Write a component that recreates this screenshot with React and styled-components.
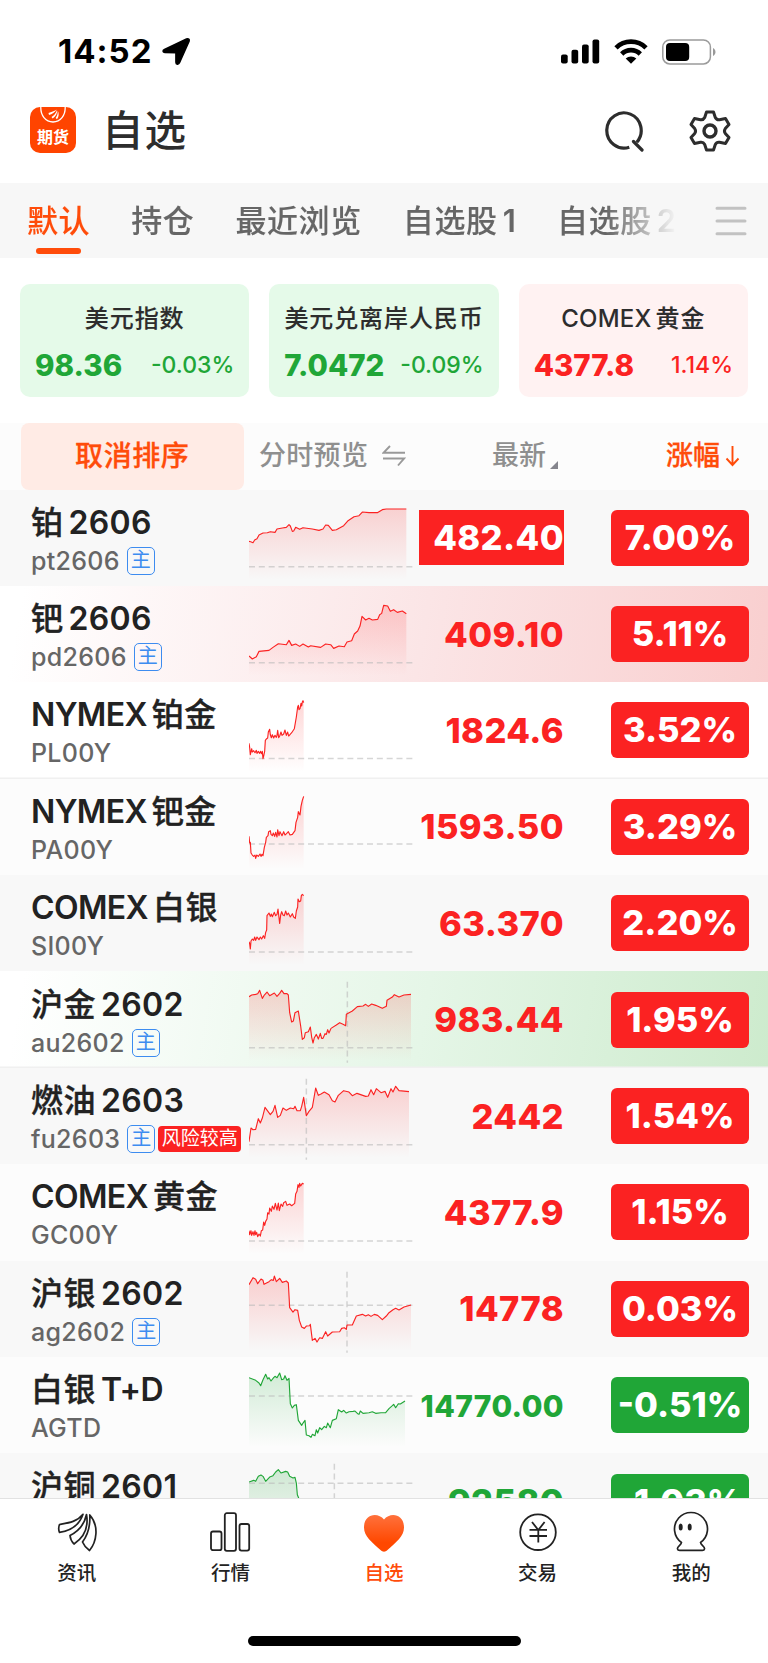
import { useId } from "react";
import styled, { createGlobalStyle, css } from "styled-components";

const RED = "#fb2222";
const GREEN = "#20a637";
const ORANGE = "#ff4c0a";

const TABS = ["默认", "持仓", "最近浏览", "自选股1", "自选股2"];

const INDEXES = [
  { name: "美元指数", value: "98.36", change: "-0.03%" },
  { name: "美元兑离岸人民币", value: "7.0472", change: "-0.09%" },
  { name: "COMEX黄金", value: "4377.8", change: "1.14%", up: true },
];

// 分时图坐标: 492 x 289, base 为昨收线, split 为夜盘/日盘分隔线
const QUOTES = [
  {
    name: "铂2606",
    code: "pt2606",
    main: true,
    price: "482.40",
    change: "7.00%",
    up: true,
    limit: true,
    bg: "#f8f8f8",
    base: 230,
    line: "0,154 5,155 12,158 17,150 24,146 30,135 42,129 55,128 64,125 78,127 84,117 100,114 112,112 120,104 124,108 130,124 134,123 140,112 152,118 162,113 190,117 210,121 222,117 230,105 238,106 250,121 262,119 284,107 296,93 315,80 330,77 340,66 360,68 385,68 400,59 412,57 472,57",
  },
  {
    name: "钯2606",
    code: "pd2606",
    main: true,
    price: "409.10",
    change: "5.11%",
    up: true,
    bg: "linear-gradient(100deg, #fff 3%, #fbe5e6 55%, #f9cfcf 100%)",
    base: 230,
    line: "0,210 10,219 22,212 30,196 60,193 72,184 88,173 112,176 120,163 128,178 140,174 152,181 162,174 178,183 185,179 215,184 230,174 245,176 254,187 270,180 286,182 294,168 308,164 316,144 326,135 333,120 339,91 350,102 360,97 370,102 386,100 392,86 398,82 404,58 416,60 424,76 434,71 445,79 460,75 472,83",
  },
  {
    name: "NYMEX铂金",
    code: "PL00Y",
    price: "1824.6",
    change: "3.52%",
    up: true,
    bg: "#fff",
    divider: true,
    base: 229,
    line: "0,184 2,196 4,218 8,200 10,210 14,206 18,212 22,205 24,214 28,208 32,214 35,208 38,215 40,208 42,230 44,222 47,208 49,175 53,170 56,168 58,150 62,142 64,158 67,167 70,158 74,168 78,160 82,166 84,160 86,145 89,167 92,162 96,150 99,160 104,156 108,144 112,160 116,150 119,162 128,152 136,140 142,105 146,75 148,70 150,83 153,80 156,64 158,72 160,60 162,56 164,62",
  },
  {
    name: "NYMEX钯金",
    code: "PA00Y",
    price: "1593.50",
    change: "3.29%",
    up: true,
    bg: "#fcfcfc",
    base: 195,
    line: "0,172 2,192 4,190 6,222 10,228 14,232 18,228 20,238 23,228 28,232 33,225 36,232 39,226 42,230 46,205 50,190 52,175 57,170 59,158 64,155 66,166 70,170 73,162 77,172 80,160 84,174 86,152 90,170 93,158 99,170 104,158 108,168 114,162 118,158 123,168 130,166 138,155 141,130 146,115 148,98 153,108 156,82 160,64 162,58 164,52",
  },
  {
    name: "COMEX白银",
    code: "SI00Y",
    price: "63.370",
    change: "2.20%",
    up: true,
    bg: "#f8f8f8",
    base: 231,
    line: "0,200 2,206 4,222 6,198 10,192 14,196 17,186 20,196 24,186 30,194 34,186 38,192 43,182 47,190 50,172 53,165 54,122 60,114 64,124 67,117 70,125 76,112 80,122 84,118 87,102 92,145 95,120 98,110 102,120 106,122 110,108 114,120 118,114 124,126 130,116 134,126 139,130 142,108 146,96 147,72 151,80 155,78 157,62 160,58 164,62",
  },
  {
    name: "沪金2602",
    code: "au2602",
    main: true,
    price: "983.44",
    change: "1.95%",
    up: true,
    bg: "linear-gradient(100deg, #fff 3%, #e5f6e7 55%, #cdebcd 100%)",
    divider: true,
    base: 230,
    split: 295,
    line: "0,77 8,72 20,70 26,68 32,58 40,82 46,72 54,63 62,74 76,66 84,76 92,67 98,58 105,68 114,68 118,72 122,125 128,153 133,150 138,125 148,120 155,165 160,205 166,200 169,185 178,182 184,168 188,198 192,216 196,200 202,190 208,204 214,187 218,202 222,202 228,188 232,190 236,176 240,186 246,172 262,162 272,155 282,160 290,164 292,130 310,120 325,107 342,105 350,100 358,106 368,99 380,103 400,112 412,106 414,88 430,78 436,71 450,78 465,72 486,70",
  },
  {
    name: "燃油2603",
    code: "fu2603",
    main: true,
    risk: true,
    price: "2442",
    change: "1.54%",
    up: true,
    bg: "#f8f8f8",
    base: 230,
    split: 172,
    line: "0,221 6,180 12,185 20,184 28,152 34,165 40,150 48,118 64,140 72,130 78,112 86,148 94,142 102,120 112,127 124,120 134,122 138,115 144,128 154,128 158,115 164,88 172,143 180,130 190,118 200,60 208,82 216,78 226,72 240,80 250,98 258,102 268,82 284,68 300,72 310,83 324,76 350,85 358,84 366,65 374,80 382,62 396,74 408,70 416,88 426,62 432,72 440,55 450,68 480,71",
  },
  {
    name: "COMEX黄金",
    code: "GC00Y",
    price: "4377.9",
    change: "1.15%",
    up: true,
    bg: "#fcfcfc",
    base: 231,
    line: "0,200 2,212 6,200 8,214 12,203 15,214 18,200 20,212 23,205 26,218 30,210 34,216 37,200 41,198 44,174 47,184 50,172 54,165 56,146 60,150 62,132 67,142 70,126 75,136 79,118 84,138 88,117 91,140 96,120 101,127 104,116 110,112 114,124 122,120 128,125 137,118 140,90 144,82 147,62 150,70 152,58 155,66 160,58 164,60",
  },
  {
    name: "沪银2602",
    code: "ag2602",
    main: true,
    price: "14778",
    change: "0.03%",
    up: true,
    bg: "#f8f8f8",
    base: 133,
    split: 294,
    line: "0,71 12,50 20,55 26,68 36,54 42,58 45,70 60,62 67,56 73,58 76,45 82,62 92,52 100,64 112,60 118,66 122,140 132,153 138,146 146,148 151,178 158,198 166,202 172,195 182,194 184,190 190,238 198,232 204,243 212,230 220,232 230,212 236,225 250,213 272,212 278,202 286,200 292,205 294,192 310,192 322,165 340,160 350,165 358,161 366,166 376,160 386,163 400,176 412,165 420,155 432,146 440,142 450,147 465,138 486,132",
  },
  {
    name: "白银T+D",
    code: "AGTD",
    price: "14770.00",
    change: "-0.51%",
    small: true,
    bg: "#fcfcfc",
    base: 117,
    line: "0,62 20,70 30,78 35,86 42,68 50,52 56,66 60,62 66,72 74,62 78,58 84,62 92,48 98,68 104,66 108,56 114,70 120,64 124,140 130,153 136,145 142,143 148,190 158,205 162,198 168,190 172,234 180,236 186,241 190,232 198,236 202,218 206,228 212,212 218,218 226,208 232,212 236,198 244,212 250,190 262,185 268,158 278,165 284,160 292,168 300,164 312,163 318,162 326,170 330,172 334,162 342,169 360,167 370,164 380,169 396,167 410,167 420,155 430,146 434,142 440,152 448,140 454,141 468,132",
  },
  {
    name: "沪铜2601",
    code: "cu2601",
    main: true,
    price: "92580",
    change: "-1.03%",
    bg: "#f8f8f8",
    base: 91,
    split: 256,
    line: "0,87 14,82 20,85 28,70 36,66 42,70 50,85 62,72 72,68 80,57 88,50 96,60 110,55 116,57 122,70 132,75 138,73 142,90 145,125 149,135 155,200 200,220 300,190 486,170",
  },
];

const NAV = [
  { label: "资讯", icon: NewsIcon },
  { label: "行情", icon: MarketIcon },
  { label: "自选", icon: HeartIcon, active: true },
  { label: "交易", icon: TradeIcon },
  { label: "我的", icon: MineIcon },
];

// 中英文混排时分开渲染, 间距由外层控制
const splitScript = (text) => text.match(/[\u4e00-\u9fff]+|[^\u4e00-\u9fff]+/g);

const MixedText = ({ text }) =>
  splitScript(text).map((part) =>
    /[\u4e00-\u9fff]/.test(part) ? (
      <Han key={part}>{part}</Han>
    ) : (
      <Latin key={part} $caps={/[A-Z]/.test(part)}>
        {part}
      </Latin>
    )
  );

function App() {
  return (
    <>
      <GlobalStyle />
      <Page>
        <StatusBar />
        <Header>
          <Logo />
          <Title>自选</Title>
          <SearchIcon />
          <GearIcon />
        </Header>
        <TabBar>
          <TabList>
            {TABS.map((tab, i) => (
              <Tab key={tab} $active={i === 0}>
                <TabLabel>
                  <MixedText text={tab} />
                </TabLabel>
                {i === 0 && <Underline />}
              </Tab>
            ))}
          </TabList>
          <MenuIcon />
        </TabBar>
        <Cards>
          {INDEXES.map((item) => (
            <Card key={item.name} $up={item.up}>
              <CardName>
                <MixedText text={item.name} />
              </CardName>
              <CardRow>
                <CardValue>{item.value}</CardValue>
                <CardChange>{item.change}</CardChange>
              </CardRow>
            </Card>
          ))}
        </Cards>
        <SortBar>
          <CancelSort>取消排序</CancelSort>
          <Preview>
            分时预览
            <SwapIcon />
          </Preview>
          <Latest>
            最新
            <Corner />
          </Latest>
          <Range>
            涨幅
            <DownIcon />
          </Range>
        </SortBar>
        <List>
          {QUOTES.map((quote) => (
            <QuoteRow key={quote.code} quote={quote} />
          ))}
        </List>
        <BottomNav>
          {NAV.map(({ label, icon: Icon, active }) => (
            <NavItem key={label} $active={active}>
              <Icon />
              {label}
            </NavItem>
          ))}
        </BottomNav>
        <HomeArea>
          <HomeBar />
        </HomeArea>
      </Page>
    </>
  );
}

const QuoteRow = ({ quote }) => (
  <Row $bg={quote.bg} $divider={quote.divider}>
    <NameCell>
      <Name>
        <MixedText text={quote.name} />
      </Name>
      <CodeLine>
        <Code>{quote.code}</Code>
        {quote.main && <MainTag>主</MainTag>}
        {quote.risk && <RiskTag>风险较高</RiskTag>}
      </CodeLine>
    </NameCell>
    <Sparkline quote={quote} />
    <Price $up={quote.up} $limit={quote.limit} $small={quote.small}>
      {quote.price}
    </Price>
    <Change $up={quote.up}>{quote.change}</Change>
  </Row>
);

const Sparkline = ({ quote }) => {
  const id = useId();
  const color = quote.up ? RED : GREEN;
  const last = quote.line.split(" ").pop().split(",")[0];
  return (
    <Chart viewBox="0 0 492 289" preserveAspectRatio="none">
      <defs>
        <linearGradient id={id} gradientUnits="userSpaceOnUse" x1="0" y1="50" x2="0" y2="270">
          <stop offset="0" stopColor={color} stopOpacity="0.19" />
          <stop offset="1" stopColor={color} stopOpacity="0" />
        </linearGradient>
      </defs>
      <polygon points={`0,270 ${quote.line} ${last},270`} fill={`url(#${id})`} />
      <g stroke="#bbb" strokeOpacity="0.6" strokeWidth="4.5" strokeDasharray="18 11.5">
        <line x1="0" x2="492" y1={quote.base} y2={quote.base} />
        {quote.split && <line x1={quote.split} x2={quote.split} y1="32" y2="275" />}
      </g>
      <polyline
        points={quote.line}
        fill="none"
        stroke={color}
        strokeWidth="3.4"
        strokeLinejoin="round"
      />
    </Chart>
  );
};

const StatusBar = () => (
  <Status>
    <Time>14:52</Time>
    <svg width="29" height="29" viewBox="0 0 29 29">
      <path
        d="M2.500 12.500 24.500 2c1.900-.9 3.300.4 2.600 2.300L17.500 25.800c-.9 2-3.600 1.800-3.600-.6V15.800L2.700 15.500C.5 15.400.5 13.500 2.500 12.500Z"
        stroke="#000"
        strokeWidth="1.500"
      />
    </svg>
    <StatusIcons>
      <svg width="39" height="25" viewBox="0 0 39 25">
        <rect x="0" y="15.500" width="6.700" height="9" rx="2" />
        <rect x="10.500" y="10.700" width="6.700" height="13.800" rx="2" />
        <rect x="21" y="5.600" width="6.700" height="18.900" rx="2" />
        <rect x="31.500" y="0.500" width="6.700" height="24" rx="2" />
      </svg>
      <svg width="34" height="25" viewBox="0 0 34 25">
        <g fill="none" stroke="#000" strokeWidth="4.700">
          <path d="M2 8.900a21.300 21.300 0 0 1 30 0" />
          <path d="M7.700 15a13.200 13.200 0 0 1 18.600 0" />
        </g>
        <path d="M17 24.800l-5.300-5.200a7.600 7.600 0 0 1 10.600 0z" />
      </svg>
      <svg width="55" height="26" viewBox="0 0 55 26">
        <rect x="0.800" y="0.900" width="47.600" height="24" rx="7" fill="none" stroke="#9b9b9b" strokeWidth="1.500" />
        <rect x="4" y="4" width="23.200" height="18" rx="4" />
        <path d="M51 9v8c3.300-1.600 3.300-6.400 0-8z" fill="#999" />
      </svg>
    </StatusIcons>
  </Status>
);

const Logo = () => (
  <LogoBox>
    <svg width="46" height="18" viewBox="0 0 46 18">
      <path d="M10.800 0C10.500 8.500 15.500 15 23 15S35.500 8.500 35.200 0" fill="none" stroke="#fff" strokeWidth="1.300" />
      <path
        d="M26.500 2.500c-2.500 2-5 2.300-8 3.500l.5 2c3-.8 6-2.500 7.500-5.500zM27 3c-1 3.500-3 5.300-5.500 7l1.200 1.500c3-2 4.800-5 4.300-8.500zM27.700 3.500c.3 3-.5 5.300-2 7.500l1.300 1.300c1.900-2.800 2.300-6 .7-8.800z"
        fill="#fff"
      />
    </svg>
    <span>期货</span>
  </LogoBox>
);

const SearchIcon = () => (
  <SearchSvg width="42" height="42" viewBox="0 0 42 42">
    <g fill="none" stroke="#2d2d2d" strokeWidth="3.200" strokeLinecap="round">
      <path d="M25.300 37.200a17.200 17.600 0 1 1 7.500-5" strokeLinecap="butt" />
      <path d="M29.500 31.500l8.500 8.500" />
    </g>
  </SearchSvg>
);

const GearIcon = () => (
  <svg width="42" height="42" viewBox="0 0 42 42">
    <g fill="none" stroke="#2d2d2d" strokeWidth="3" strokeLinejoin="round">
      <path d="M17.500 2h7l1.800 5.500c.8 1.500 2.500 2.500 4.200 2.200l6-1.200 3.500 6-3.700 4.100c-1 1.400-1 3.400 0 4.800l3.700 4.100-3.500 6-6-1.200c-1.700-.3-3.400.7-4.200 2.200L24.500 40h-7l-1.800-5.500c-.8-1.500-2.500-2.500-4.200-2.200l-6 1.200-3.500-6 3.700-4.100c1-1.400 1-3.400 0-4.800L2 14.500l3.500-6 6 1.200c1.700.3 3.400-.7 4.200-2.200z" />
      <circle cx="21" cy="21" r="6" strokeWidth="3.400" />
    </g>
  </svg>
);

const MenuIcon = () => (
  <svg width="32" height="30" viewBox="0 0 32 30">
    <path d="M2 2.200h28M2 15h28M2 27.800h28" stroke="#c2c2c2" strokeWidth="3" strokeLinecap="round" />
  </svg>
);

const SwapIcon = () => (
  <svg width="24" height="24" viewBox="0 0 24 24">
    <path d="M8 2 1.500 8.800H23M1 14.500h21L16 21.500" fill="none" stroke="#999" strokeWidth="1.900" />
  </svg>
);

const DownIcon = () => (
  <svg width="15" height="22" viewBox="0 0 15 22">
    <path d="M7.500 1v19M1.500 13.500l6 6.500 6-6.500" fill="none" stroke={ORANGE} strokeWidth="1.900" />
  </svg>
);

function NewsIcon() {
  return (
    <svg width="42" height="42" viewBox="0 0 42 42">
      <g fill="none" stroke="#222" strokeWidth="1.700" strokeLinejoin="round">
        <path d="M27 3.300C21 11 12 12 3.500 13.500 2.500 16 2.500 19 3.500 21.300 13 20 23 15 27 3.300z" />
        <path d="M30.500 3.500C28.500 13 23 20 14 24.500c.3 3.500 2 6.500 4 8.500C27 27 33 18 30.500 3.500z" />
        <path d="M33.800 4C34.500 17 31 25 26.500 31c1.500 3.500 4 6.500 7 8.500C40.500 31 43.500 15 33.800 4z" />
      </g>
    </svg>
  );
}

function MarketIcon() {
  return (
    <svg width="42" height="42" viewBox="0 0 42 42">
      <g fill="none" stroke="#222" strokeWidth="1.800">
        <rect x="2" y="20.500" width="10.500" height="18.700" rx="2" />
        <rect x="15.800" y="2.200" width="11.200" height="37.600" rx="2" />
        <rect x="30.500" y="13" width="9.700" height="26.600" rx="2" />
      </g>
    </svg>
  );
}

function HeartIcon() {
  return (
    <svg width="42" height="42" viewBox="0 0 42 42">
      <defs>
        <linearGradient id="heart" x1="0" y1="0" x2="0" y2="1">
          <stop offset="0" stopColor="#ff713c" />
          <stop offset=".75" stopColor="#ff4800" />
        </linearGradient>
      </defs>
      <path
        d="M21 8.500C15 1 1 2.500 1 16.500c0 9 8 14.500 16.500 22.600 2.300 2.200 4.700 2.200 7 0C33 31 41 25.500 41 16.500 41 2.500 27 1 21 8.500z"
        fill="url(#heart)"
      />
    </svg>
  );
}

function TradeIcon() {
  return (
    <svg width="42" height="42" viewBox="0 0 42 42">
      <g fill="none" stroke="#222" strokeWidth="1.800">
        <circle cx="21" cy="21.200" r="17.800" />
        <path d="M15 11l6.300 8 6.300-8M12.500 18.800h17.500M12.500 25h17.500M21.300 19v12.500" />
      </g>
    </svg>
  );
}

function MineIcon() {
  return (
    <svg width="42" height="42" viewBox="0 0 42 42">
      <path
        d="M11.500 31.500A16.500 16.500 0 1 1 30.500 31.500c.3 2.500 4.500 4 4 6.300-.2 1.200-1 1.600-2.200 1.600H9.700c-1.200 0-2-.4-2.200-1.600-.5-2.300 3.700-3.800 4-6.300z"
        fill="none"
        stroke="#222"
        strokeWidth="1.700"
        strokeLinejoin="round"
      />
      <ellipse cx="10.700" cy="16" rx="2" ry="3.500" fill="#222" />
      <ellipse cx="19.700" cy="16" rx="2" ry="3.500" fill="#222" />
    </svg>
  );
}

const GlobalStyle = createGlobalStyle`
  * {
    box-sizing: border-box;
  }
  body {
    margin: 0;
    background: #fff;
    font-family: Inter, "Noto Sans CJK SC", sans-serif;
    color: #222;
  }
  svg {
    display: block;
    flex-shrink: 0;
  }
`;

const Page = styled.div`
  display: flex;
  flex-direction: column;
  width: 768px;
  height: 1663px;
  overflow: hidden;
`;

const Han = styled.span`
  -webkit-text-stroke: 0.1px currentColor;
`;

const Latin = styled.span`
  font-weight: 600;
  letter-spacing: ${({ $caps }) => ($caps ? "-0.02em" : "0.01em")};
`;

const Status = styled.div`
  display: flex;
  align-items: center;
  height: 88px;
  padding: 15px 51px 0 58px;
`;

const Time = styled.span`
  width: 104px;
  margin-top: -1px;
  font-size: 33px;
  font-weight: 700;
  letter-spacing: 1px;
  color: #000;
`;

const StatusIcons = styled.div`
  display: flex;
  align-items: center;
  gap: 14px;
  margin-left: auto;
`;

const Header = styled.header`
  display: flex;
  align-items: center;
  height: 95px;
  padding: 0 37px 10px 30px;
`;

const LogoBox = styled.div`
  display: flex;
  flex-direction: column;
  align-items: center;
  width: 46px;
  height: 46px;
  margin-bottom: 1px;
  border-radius: 10px;
  background: #ff4400;
  color: #fff;
  font-size: 16px;
  font-weight: 600;
  line-height: 24px;
`;

const Title = styled.h1`
  margin: 0 auto 0 26px;
  font-size: 41.500px;
  font-weight: 500;
  line-height: 60px;
  letter-spacing: 1px;
  color: #2d2d2d;
`;

const SearchSvg = styled.svg`
  margin-right: 43px;
`;

const TabBar = styled.nav`
  display: flex;
  align-items: center;
  justify-content: space-between;
  height: 75px;
  padding: 0 21px 0 27px;
  background: #f7f7f7;
`;

const TabList = styled.div`
  display: flex;
  gap: 41px;
  width: 650px;
  overflow: hidden;
  mask-image: linear-gradient(90deg, #000 89%, transparent 100%);
`;

const Tab = styled.div`
  display: flex;
  flex-direction: column;
  align-items: center;
  flex-shrink: 0;
  height: 75px;
  font-size: 31px;
  font-weight: 500;
  color: ${({ $active }) => ($active ? ORANGE : "#666")};
`;

const TabLabel = styled.div`
  display: flex;
  gap: 5px;
  height: 65px;
  line-height: 76px;
  letter-spacing: 0.6px;
`;

const Underline = styled.i`
  width: 45px;
  height: 6px;
  border-radius: 3px;
  background: ${ORANGE};
`;

const Cards = styled.section`
  display: grid;
  grid-template-columns: repeat(3, 1fr);
  gap: 20px;
  padding: 26px 20px;
`;

const Card = styled.div`
  height: 112.500px;
  padding: 17.500px 15px 0;
  border-radius: 10px;
  background: ${({ $up }) => ($up ? "#fff2f2" : "#e5fae9")};
  color: ${({ $up }) => ($up ? RED : GREEN)};
`;

const CardName = styled.div`
  display: flex;
  justify-content: center;
  gap: 4px;
  font-size: 24px;
  font-weight: 500;
  line-height: 34px;
  letter-spacing: 0.9px;
  white-space: nowrap;
  color: #2d2d2d;

  ${Latin} {
    font-weight: 500;
    letter-spacing: 0.2px;
  }
`;

const CardRow = styled.div`
  display: flex;
  align-items: center;
  justify-content: space-between;
  margin-top: 12.500px;
  line-height: 34px;
`;

const CardValue = styled.span`
  font-size: 29.500px;
  font-weight: 800;
`;

const CardChange = styled.span`
  font-size: 23px;
  font-weight: 500;
`;

const SortBar = styled.div`
  display: flex;
  align-items: center;
  height: 67px;
  padding-left: 20.500px;
  background: #fcfcfc;
  font-size: 27px;
  font-weight: 500;
  line-height: 36px;
  color: #8f8f8f;
`;

const CancelSort = styled.div`
  width: 223.500px;
  height: 67px;
  border-radius: 8px;
  background: #ffebe5;
  font-size: 28px;
  letter-spacing: 0.6px;
  line-height: 67px;
  text-align: center;
  color: ${ORANGE};
  -webkit-text-stroke: 0.3px currentColor;
`;

const Preview = styled.div`
  display: flex;
  align-items: center;
  gap: 14px;
  width: 233px;
  padding-left: 15px;
  letter-spacing: 0.3px;
`;

const Latest = styled.div`
  display: flex;
  align-items: center;
  gap: 4px;
  width: 174px;
  padding-left: 15px;
`;

const Corner = styled.i`
  margin-top: 18px;
  border: 4px solid transparent;
  border-right-color: #85858d;
  border-bottom-color: #85858d;
`;

const Range = styled.div`
  display: flex;
  align-items: center;
  gap: 5px;
  padding-left: 15px;
  color: ${ORANGE};
  -webkit-text-stroke: 0.3px currentColor;
`;

const List = styled.main`
  flex: 1;
  min-height: 0;
  overflow: hidden;
`;

const Row = styled.div`
  display: flex;
  align-items: center;
  height: 96.400px;
  padding-left: 31px;
  background: ${({ $bg }) => $bg};
  box-shadow: ${({ $divider }) => ($divider ? "inset 0 -1.5px #f0f0f0" : "none")};
`;

const NameCell = styled.div`
  width: 218px;
  padding-top: 2px;
`;

const Name = styled.div`
  display: flex;
  gap: 5px;
  font-size: 32px;
  font-weight: 500;
  line-height: 40px;
  letter-spacing: 0.5px;
  white-space: nowrap;
  color: #222;

  ${Han} {
    -webkit-text-stroke-width: 0.35px;
  }
`;

const CodeLine = styled.div`
  display: flex;
  align-items: center;
  height: 28px;
  margin-top: 4px;
`;

const Code = styled.span`
  margin-right: 7px;
  font-size: 25px;
  font-weight: 500;
  line-height: 28px;
  letter-spacing: 0.300px;
  color: #666;
`;

const MainTag = styled.span`
  width: 28px;
  height: 28px;
  border: 1.500px solid #3d8cf0;
  border-radius: 5px;
  font-size: 20px;
  line-height: 25px;
  text-align: center;
  color: #3d8cf0;
`;

const RiskTag = styled.span`
  width: 83px;
  height: 26px;
  margin-left: 3px;
  border-radius: 4px;
  background: ${RED};
  font-size: 19px;
  line-height: 26px;
  text-align: center;
  white-space: nowrap;
  color: #fff;
`;

const Chart = styled.svg`
  width: 164px;
  height: 96.400px;
`;

const Price = styled.div`
  width: 145px;
  height: 55px;
  margin-left: 6px;
  font-size: ${({ $small }) => ($small ? "30px" : "34.5px")};
  font-weight: 800;
  line-height: 56px;
  letter-spacing: 0.4px;
  text-align: right;
  white-space: nowrap;
  color: ${({ $up }) => ($up ? RED : GREEN)};
  ${({ $limit }) =>
    $limit &&
    css`
      background: ${RED};
      color: #fff;
    `}
`;

const Change = styled.div`
  width: 138px;
  height: 56px;
  margin-left: 47px;
  border-radius: 6px;
  background: ${({ $up }) => ($up ? RED : GREEN)};
  font-size: 34.500px;
  font-weight: 800;
  line-height: 56px;
  text-align: center;
  color: #fff;
`;

const BottomNav = styled.nav`
  display: grid;
  grid-template-columns: repeat(5, 1fr);
  height: 122px;
  border-top: 1px solid #e2e2e2;
  background: #fff;
`;

const NavItem = styled.div`
  display: flex;
  flex-direction: column;
  align-items: center;
  gap: 2px;
  padding-top: 12px;
  font-size: 19.500px;
  font-weight: 500;
  line-height: 36px;
  color: ${({ $active }) => ($active ? ORANGE : "#222")};
`;

const HomeArea = styled.div`
  display: flex;
  justify-content: center;
  height: 43px;
  padding-top: 16px;
  background: #fff;
`;

const HomeBar = styled.div`
  width: 273px;
  height: 10px;
  border-radius: 5px;
  background: #000;
`;

export default App;
